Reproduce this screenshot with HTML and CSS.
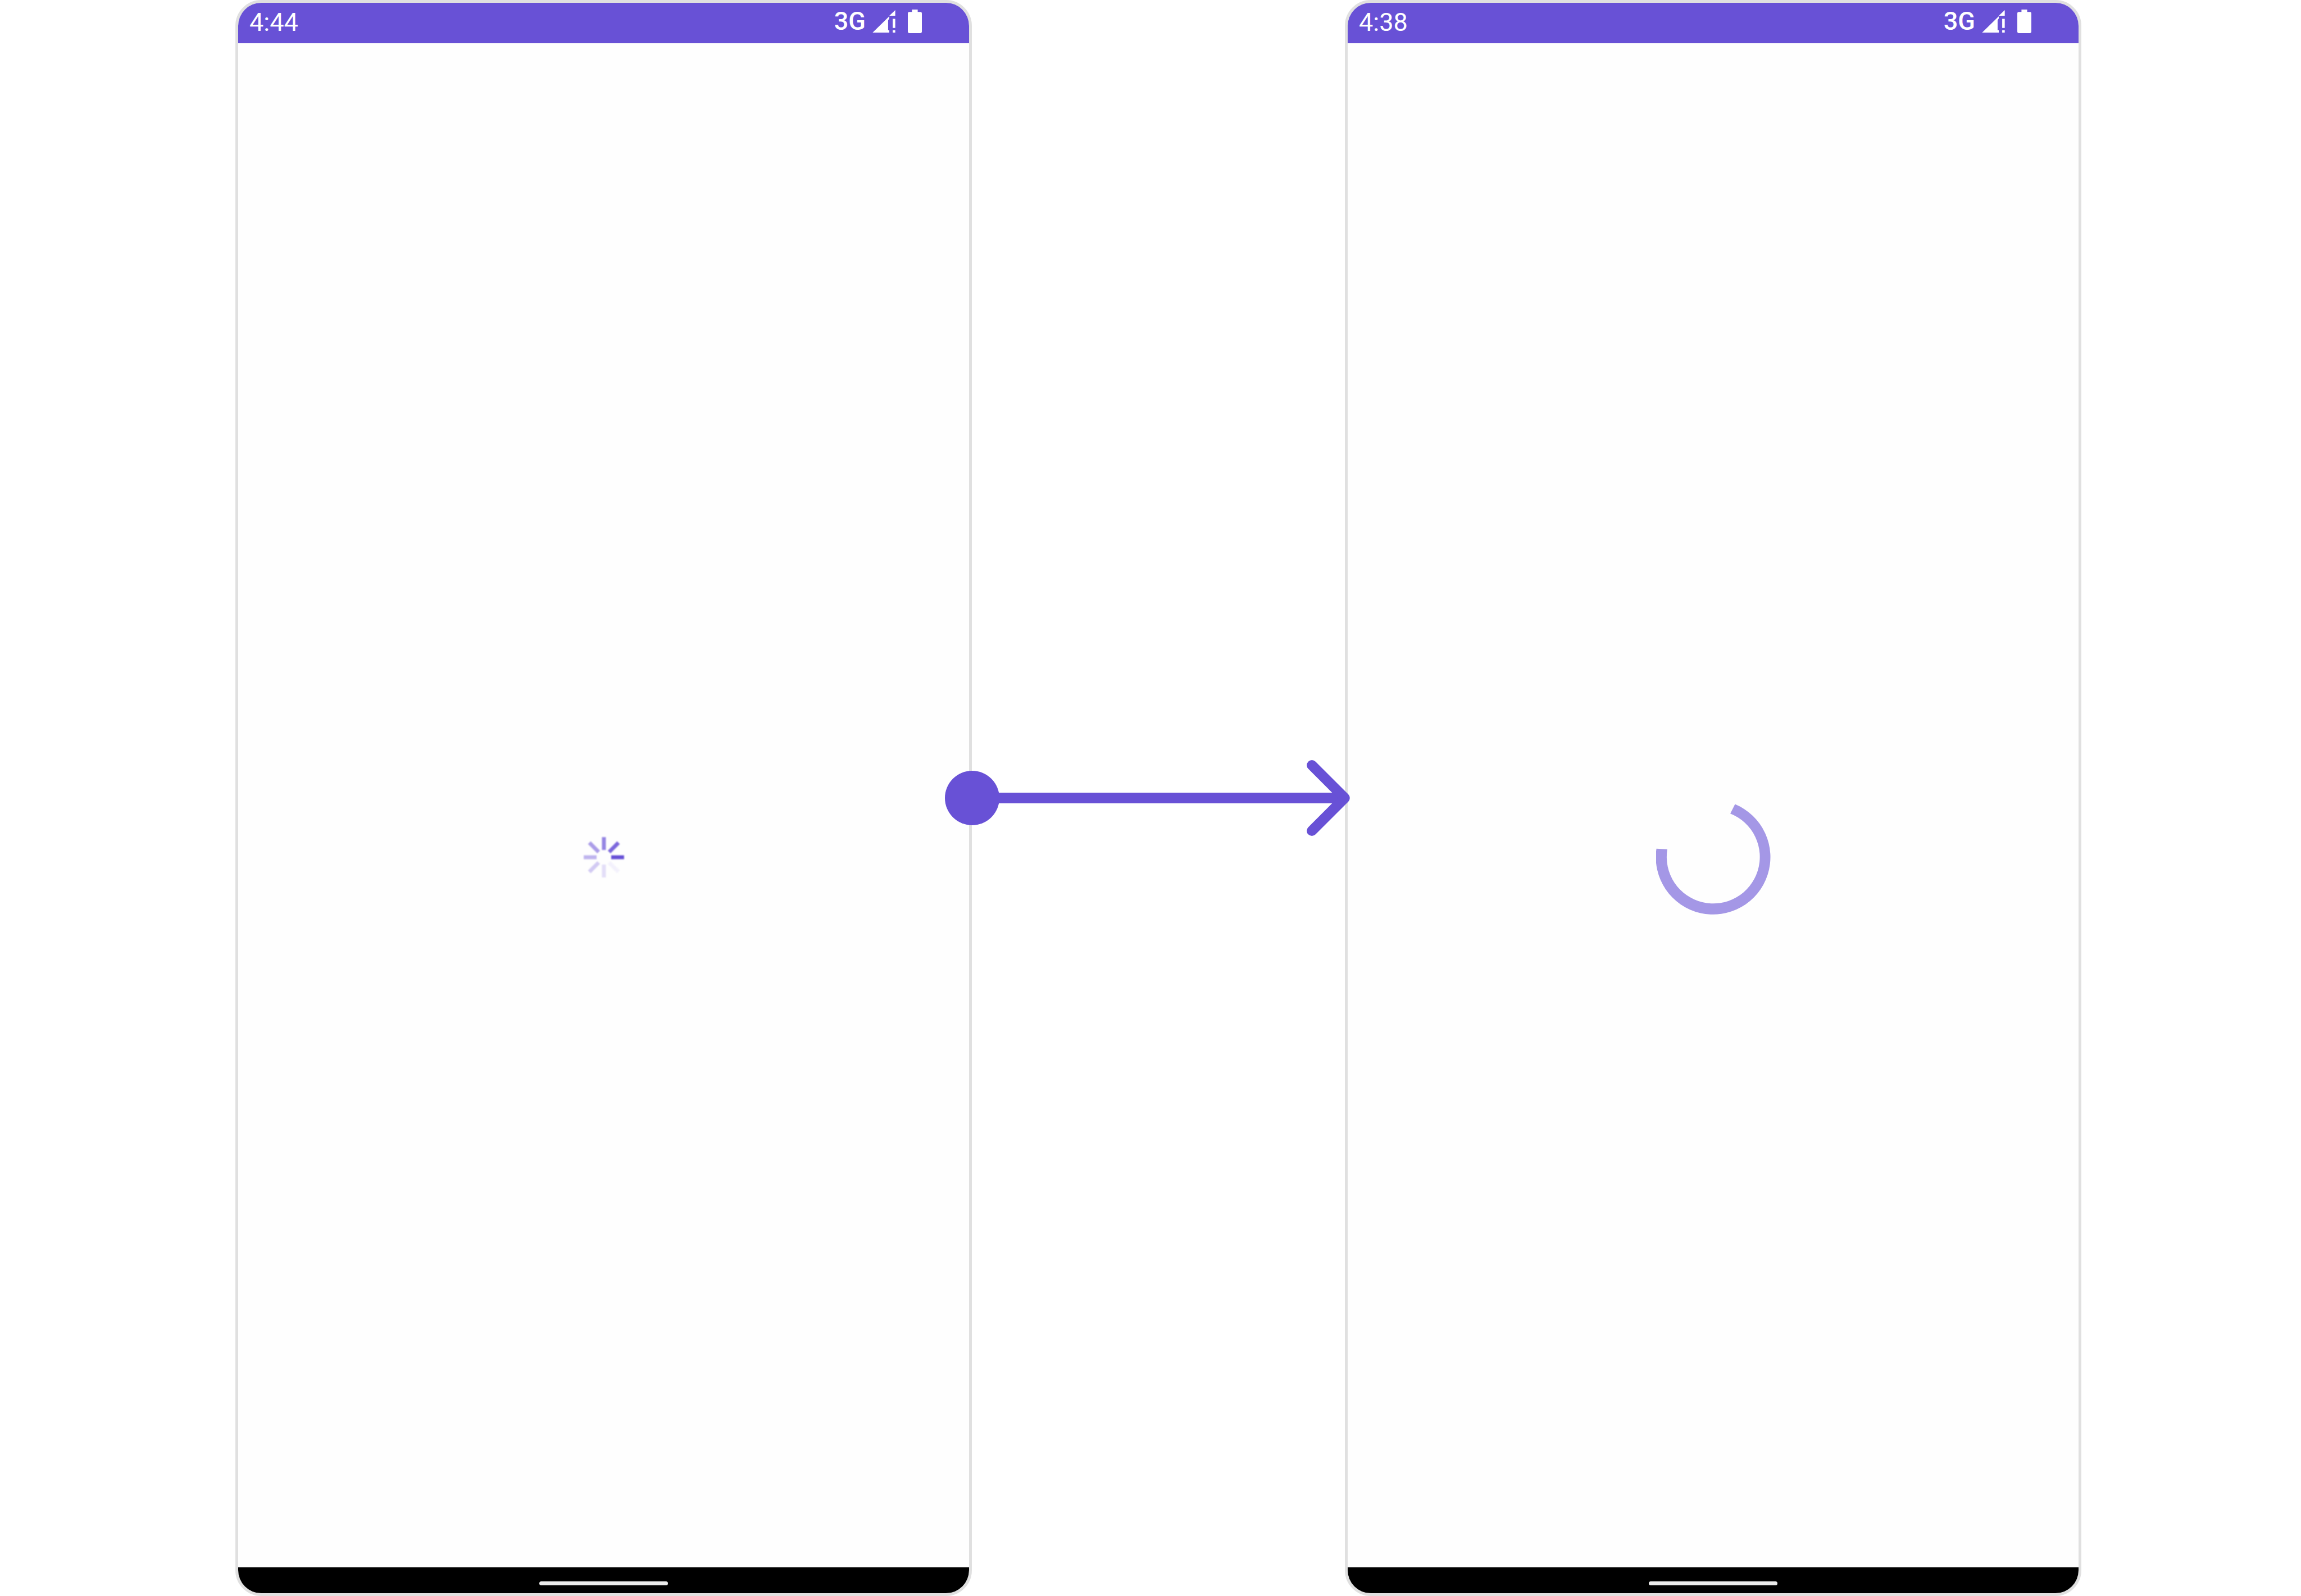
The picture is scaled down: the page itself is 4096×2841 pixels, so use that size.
FILE: index.html
```html
<!DOCTYPE html>
<html lang="en">
<head>
<meta charset="utf-8">
<title>Loading indicator</title>
<link rel="stylesheet" href="styles.css">
</head>
<body>
<svg class="symbols" aria-hidden="true">
  <symbol id="signal" viewBox="0 0 133 132">
    <path d="M0 132 98 36V49L91 60V118H98V132ZM98 33 133 0V33ZM118 51H133V105H118ZM118 118H133V132H118Z"/>
  </symbol>
  <symbol id="battery" viewBox="0 0 81 136">
    <path d="M24 0H57V14H73Q81 14 81 22V128Q81 136 73 136H8Q0 136 0 128V22Q0 14 8 14H24Z"/>
  </symbol>
</svg>
<main class="board">
  <section class="phone phone-before">
    <header class="status">
      <time class="clock">4:44</time>
      <span class="network">3G</span>
      <svg class="signal"><use href="#signal"/></svg>
      <svg class="battery"><use href="#battery"/></svg>
    </header>
    <div class="screen">
      <svg class="spinner" viewBox="-126 -126 252 252" role="img" aria-label="Loading">
        <path stroke="#6750d6" d="M43 0H119"/>
        <path stroke="#7c68dc" d="M31 -31 86 -86"/>
        <path stroke="#9484e3" d="M0 -43V-119"/>
        <path stroke="#ab9de8" d="M-31 -31-86 -86"/>
        <path stroke="#bfb4ee" d="M-43 0H-119"/>
        <path stroke="#d2caf3" d="M-31 31-86 86"/>
        <path stroke="#e3def8" d="M0 43V119"/>
        <path stroke="#f3f1fc" d="M31 31 86 86"/>
      </svg>
    </div>
    <footer class="navbar"><span class="pill"></span></footer>
  </section>
  <div class="connector">
    <span class="dot"></span>
    <span class="line"></span>
    <svg class="head" viewBox="0 0 84 148"><path d="M10 10 74 74 10 138"/></svg>
  </div>
  <section class="phone phone-after">
    <header class="status">
      <time class="clock">4:38</time>
      <span class="network">3G</span>
      <svg class="signal"><use href="#signal"/></svg>
      <svg class="battery"><use href="#battery"/></svg>
    </header>
    <div class="screen">
      <svg class="ring" viewBox="0 0 672 672" role="img" aria-label="Loading">
        <path d="M463 25A336 336 0 1 1 2 286L66 289A273 273 0 1 0 435 80Z"/>
      </svg>
    </div>
    <footer class="navbar"><span class="pill"></span></footer>
  </section>
</main>
</body>
</html>
```
FILE: styles.css
```css
:root {
  --accent: #6851d6;
}

body {
  margin: 0;
  background: #fff;
  font-family: Roboto, sans-serif;
}

.symbols {
  position: absolute;
  width: 0;
  height: 0;
}

.board {
  display: grid;
  grid-template-columns: 419fr 1311fr 664fr 1311fr 391fr;
  min-height: 100vh;
}

.phone {
  display: flex;
  flex-direction: column;
  box-sizing: border-box;
  border: 5px solid #e0e0e0;
  border-radius: 46px;
  overflow: hidden;
}

.phone-before {
  grid-column: 2;
}

.phone-after {
  grid-column: 4;
}

.status {
  display: flex;
  align-items: center;
  box-sizing: border-box;
  height: 72px;
  padding: 0 84px 6px 20px;
  background: var(--accent);
  color: #fff;
  fill: #fff;
}

.clock {
  margin-right: auto;
  padding-top: 4px;
  font-size: 45px;
  line-height: 52px;
}

.network {
  font-size: 45px;
  font-weight: 500;
  line-height: 52px;
}

.signal {
  width: 41px;
  height: 40px;
  margin: 0 22px 0 12px;
}

.battery {
  width: 25px;
  height: 42px;
}

.screen {
  display: grid;
  flex: 1;
  place-items: center;
  padding-top: 184px;
  background: #fefefe;
}

.spinner {
  width: 76px;
  height: 76px;
  stroke-width: 23;
  filter: blur(1px);
}

.ring {
  width: 204px;
  height: 204px;
  fill: #a497e6;
}

.navbar {
  display: flex;
  justify-content: center;
  box-sizing: border-box;
  height: 46px;
  padding-top: 25px;
  background: #000;
}

.pill {
  width: 229px;
  height: 7px;
  border-radius: 4px;
  background: #ebebeb;
}

.connector {
  position: relative;
  display: flex;
  grid-column: 3;
  align-items: center;
  margin: 0 -9px 0 -48px;
}

.dot {
  width: 97px;
  height: 97px;
  border-radius: 50%;
  background: var(--accent);
}

.line {
  flex: 1;
  height: 19px;
  margin: 0 -66px 0 -2px;
  background: var(--accent);
}

.head {
  width: 77px;
  height: 135px;
  fill: none;
  stroke: var(--accent);
  stroke-width: 20;
  stroke-linejoin: round;
  stroke-linecap: round;
}
```
